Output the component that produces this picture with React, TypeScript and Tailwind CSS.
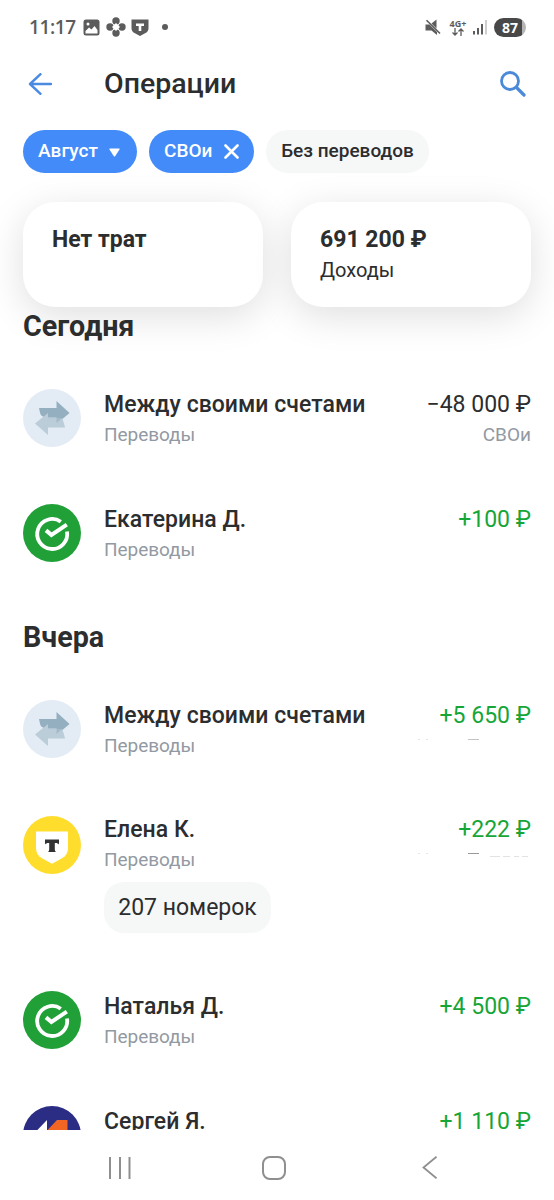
import type { ReactNode } from "react";

type Bank = "own" | "sber" | "tbank" | "psb";

interface Operation {
  id: number;
  bank: Bank;
  name: string;
  amount: string;
  income?: boolean;
  account?: string;
  message?: string;
  trace?: ReactNode;
}

const TODAY: Operation[] = [
  { id: 1, bank: "own", name: "Между своими счетами", amount: "−48 000 ₽", account: "СВОи" },
  { id: 2, bank: "sber", name: "Екатерина Д.", amount: "+100 ₽", income: true },
];

const YESTERDAY: Operation[] = [
  { id: 3, bank: "own", name: "Между своими счетами", amount: "+5 650 ₽", income: true, trace: <Trace /> },
  {
    id: 4,
    bank: "tbank",
    name: "Елена К.",
    amount: "+222 ₽",
    income: true,
    message: "207 номерок",
    trace: <Trace long />,
  },
  { id: 5, bank: "sber", name: "Наталья Д.", amount: "+4 500 ₽", income: true },
  { id: 6, bank: "psb", name: "Сергей Я.", amount: "+1 110 ₽", income: true },
];

// Остаток скрытой подписи счёта
function Trace({ long }: { long?: boolean }) {
  return (
    <svg width="114" height="30" viewBox="0 0 114 30" fill="none">
      <path d="M1 8.500h2M9 8.500h2" stroke="#e6e6e6" />
      <path d="M51 8.500h11" stroke={long ? "#999" : "#c4c4c4"} />
      {long && <path d="M73 11.500h10M86 11.500h7M97 11.500h5M105 11.500h6" stroke="#e2e2e2" />}
    </svg>
  );
}

function BankIcon({ bank, className = "" }: { bank: Bank; className?: string }) {
  return (
    <svg className={`size-[58px] shrink-0 ${className}`} viewBox="0 0 58 58" fill="none">
      {bank === "own" && (
        <>
          <circle cx="29" cy="29" r="29" fill="#e3ebf4" />
          <path d="M16 19h17.500v-7L46.500 24l-13 11v-6.500H22c-3-1-5-3-5-5Z" fill="#94afc0" />
          <path d="M42 38.500H25V46L12 34.500 25 24v5.500h14.500c0 1 1 3 1.500 5Z" fill="#bacdd8" />
          <path d="M25 24v4.500h8.500V34l5-4.500H25Z" fill="#a3bac9" />
        </>
      )}
      {bank === "sber" && (
        <>
          <circle cx="29" cy="29" r="29" fill="#21a038" />
          <path d="M37.800 17.700A15 15 0 1 0 44 27.500" stroke="#fff" strokeWidth="3.800" />
          <path d="m23 26.400 5.400 4.500 15.400-10.300" stroke="#fff" strokeWidth="4" />
        </>
      )}
      {bank === "tbank" && (
        <>
          <circle cx="29" cy="29" r="29" fill="#ffdd2d" />
          <path d="M13 15.500h32v16.800c0 4.300-2.200 7.700-5.600 9.700L29 47.800 18.600 42c-3.400-2-5.600-5.400-5.600-9.700Z" fill="#fff" />
          <path d="M22 23.500h14v5c-.8-1-2-1.500-3.400-1.500h-.8v6c0 1.400.4 2.400 1.200 3h-8c.8-.6 1.200-1.600 1.200-3v-6h-.8c-1.400 0-2.600.5-3.400 1.500Z" fill="#333" />
        </>
      )}
      {bank === "psb" && (
        <>
          <circle cx="29" cy="29" r="29" fill="#2b2d84" />
          <path d="M13 25.500 24 14v10L13 36Z" fill="#fff" />
          <path d="M24.500 24 34 14h10.500v22H13Z" fill="#f26522" />
        </>
      )}
    </svg>
  );
}

function StatusBar() {
  return (
    <div className="flex h-[54px] shrink-0 items-center pr-7 pl-[29px] text-[#5c5c5c]">
      <span className="w-[54px] text-[19px] font-semibold tracking-[-0.4px] font-['Open_Sans',sans-serif]">11:17</span>
      <svg className="size-[17px]" viewBox="0 0 17 17">
        <rect x="0.500" y="0.500" width="16" height="16" rx="2.500" fill="currentColor" />
        <path d="m2.500 12 3.500-3.500 2.500 2 3-3.500 3 4V14.500h-12Z" fill="#fff" />
        <circle cx="5" cy="5" r="1.500" fill="#fff" />
      </svg>
      <svg className="ml-[6px] size-5" viewBox="0 0 20 20" fill="currentColor">
        <circle cx="10" cy="4" r="3.700" />
        <circle cx="4" cy="10" r="3.700" />
        <circle cx="16" cy="10" r="3.700" />
        <circle cx="10" cy="16" r="3.700" />
        <path d="m10 6 4 4-4 4-4-4Z" fill="#fff" />
      </svg>
      <svg className="ml-[5px] h-[17px] w-[18px]" viewBox="0 0 18 17">
        <path d="M.5.500h17V9c0 2.500-1 4-3 5L9 17l-5.500-3C1.500 13 .5 11.500.5 9Z" fill="currentColor" />
        <path d="M5 4.500h8v2.500h-2.700v5H7.700V7H5Z" fill="#fff" />
      </svg>
      <span className="ml-[13px] size-[6px] rounded-full bg-[#5c5c5c]" />

      <svg className="ml-auto size-4" viewBox="0 0 16 16" fill="currentColor">
        <path d="M.5 5.500h4L12 13v3l-5.500-4.500h-6ZM6.500 4.500 11.500.500v9Z" />
        <path d="m1.500 1.200 13.500 13.300" stroke="#5c5c5c" strokeWidth="1.600" />
      </svg>
      <div className="ml-[8px] flex w-[18px] flex-col items-center">
        <span className="text-[9px] leading-[9px] font-bold font-['Open_Sans',sans-serif]">4G+</span>
        <svg className="h-2 w-3" viewBox="0 0 12 8" fill="none" stroke="currentColor" strokeWidth="1.300">
          <path d="M3 0v7M.5 4.500 3 7l2.500-2.500M9 8V1M6.500 3.500 9 1l2.500 2.500" />
        </svg>
      </div>
      <svg className="ml-[6px] h-4 w-[14px]" viewBox="0 0 14 16" fill="currentColor">
        <path d="M0 12h2v3.500H0ZM4 9h2v6.500H4ZM8 5h2v10.500H8Z" />
        <path d="M12 1h2v14.500h-2Z" fill="#cfcfcf" />
      </svg>
      <div className="ml-[7px] flex h-[19px] w-8 items-center justify-center rounded-full bg-linear-to-r from-[#484848] from-88% to-[#b5b5b5] to-88% text-[14px] font-bold text-white font-['Open_Sans',sans-serif]">
        87
      </div>
    </div>
  );
}

function OperationRow({ op }: { op: Operation }) {
  const offset = op.message ? "" : "pt-px";

  return (
    <li className={op.message ? "flex pb-1" : "flex"}>
      <BankIcon bank={op.bank} className={op.message ? "mt-px" : ""} />
      <div className={`ml-[23px] flex-1 ${offset}`}>
        <p className="text-[23px] leading-[30px] font-medium tracking-[0.04px]">{op.name}</p>
        <p className="text-[19px] leading-[30px] tracking-[-0.05px] text-[#9299a2]">Переводы</p>
        {op.message && (
          <p className="mt-[7px] flex h-[51px] w-[167px] items-center justify-center rounded-[20px] bg-[#f6f7f7] pt-px text-[23px]">
            {op.message}
          </p>
        )}
      </div>
      <div className={`flex flex-col items-end ${offset}`}>
        <p className={`text-[23px] leading-[30px] ${op.income ? "text-[#16a637]" : ""}`}>{op.amount}</p>
        {op.account && <p className="text-[19px] leading-[30px] text-[#9299a2]">{op.account}</p>}
        {op.trace}
      </div>
    </li>
  );
}

export default function App() {
  return (
    <div className="flex h-[1200px] w-[554px] flex-col overflow-hidden bg-white text-[#2c2d2e] font-[Roboto,sans-serif]">
      <StatusBar />

      <header className="flex h-[60px] shrink-0 items-center pr-7 pl-7">
        <svg className="h-[22px] w-6" viewBox="0 0 24 22" fill="none" stroke="#4a8ae0" strokeWidth="2.400" strokeLinecap="round" strokeLinejoin="round">
          <path d="M12.500 1.200 2 11l10.500 9.800M2 11h21" />
        </svg>
        <h1 className="ml-[52px] text-[28.500px] font-medium">Операции</h1>
        <svg className="ml-auto size-[26px]" viewBox="0 0 26 26" fill="none" stroke="#4a8ad8" strokeLinecap="round">
          <circle cx="10" cy="10" r="8.500" strokeWidth="2.800" />
          <path d="m16.500 16.500 7.500 7.500" strokeWidth="3.200" />
        </svg>
      </header>

      {/* Фильтры */}
      <div className="relative z-10 mt-4 flex h-[43px] shrink-0 gap-3 px-[23px] text-[19px] font-medium">
        <button className="flex w-[114px] items-center rounded-full bg-[#428bf9] pl-[15px] text-white">
          Август
          <svg className="mt-[2px] ml-[11px] h-[9px] w-[11px]" viewBox="0 0 11 9" fill="currentColor">
            <path d="M1 .5h9q1 0 .5 1L6.300 8q-.8 1-1.600 0L.5 1.500Q0 .5 1 .5Z" />
          </svg>
        </button>
        <button className="flex w-[105px] items-center rounded-full bg-[#428bf9] pl-[15px] text-white">
          СВОи
          <svg className="ml-[12px] size-[15px]" viewBox="0 0 15 15" stroke="currentColor" strokeWidth="2.600" strokeLinecap="round">
            <path d="m1.500 1.500 12 12M13.500 1.500l-12 12" />
          </svg>
        </button>
        <button className="flex w-[163px] items-center justify-center rounded-full bg-[#f6f7f7]">Без переводов</button>
      </div>

      <section className="mt-[29px] flex h-[105px] shrink-0 gap-7 px-[23px]">
        <div className="flex-1 rounded-[32px] bg-white pt-[23px] pl-[29px] shadow-[0_9px_38px_rgba(0,0,0,0.13)]">
          <p className="text-[23px] leading-[30px] font-bold">Нет трат</p>
        </div>
        <div className="flex-1 rounded-[32px] bg-white pt-[23px] pl-[29px] shadow-[0_9px_38px_rgba(0,0,0,0.13)]">
          <p className="text-[23px] leading-[30px] font-bold">691 200 ₽</p>
          <p className="text-[20px] leading-[30px]">Доходы</p>
        </div>
      </section>

      <main className="relative min-h-0 flex-1 overflow-hidden px-[23px] pt-px">
        <h2 className="text-[28.700px] leading-[36px] font-bold">Сегодня</h2>
        <ul className="mt-[45px] space-y-[54px]">
          {TODAY.map((op) => (
            <OperationRow key={op.id} op={op} />
          ))}
        </ul>

        <h2 className="mt-[54px] text-[28.700px] leading-[36px] font-bold">Вчера</h2>
        <ul className="mt-[45px] space-y-[54px]">
          {YESTERDAY.map((op) => (
            <OperationRow key={op.id} op={op} />
          ))}
        </ul>
      </main>

      <nav className="flex h-[70px] shrink-0 items-center justify-between pt-[5px] pr-[117px] pl-[109px]">
        <svg className="h-[22px] w-[22px]" viewBox="0 0 22 22" stroke="#8f8f8f" strokeWidth="2">
          <path d="M1 0v22M11 0v22M20.500 0v22" />
        </svg>
        <svg className="mr-[6px] size-6" viewBox="0 0 24 24" fill="none" stroke="#8f8f8f" strokeWidth="2">
          <rect x="1" y="1" width="22" height="22" rx="7" />
        </svg>
        <svg className="h-[23px] w-[15px]" viewBox="0 0 15 23" fill="none" stroke="#8f8f8f" strokeWidth="1.800">
          <path d="M14.500.7 1.500 11.500l13 10.800" />
        </svg>
      </nav>
    </div>
  );
}
